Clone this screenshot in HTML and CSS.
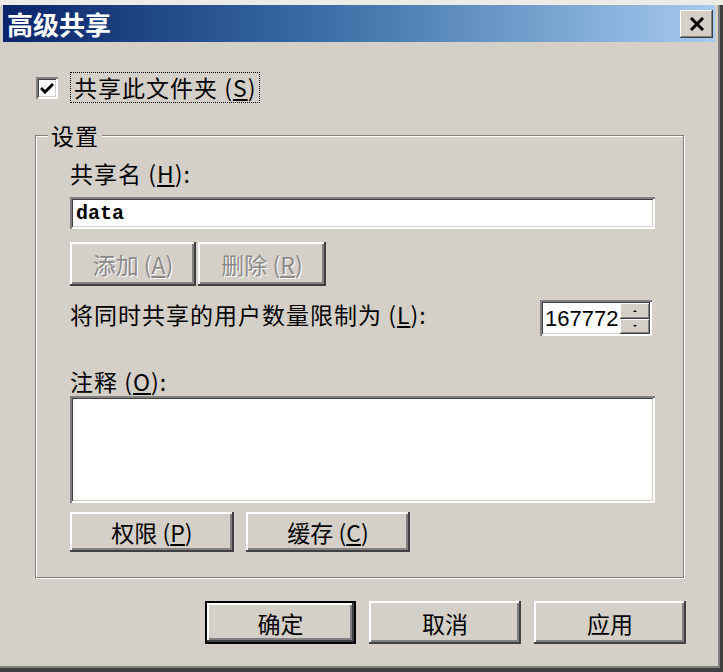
FILE: index.html
```html
<!DOCTYPE html>
<html lang="zh-CN">
<head>
    <meta charset="UTF-8">
    <title>高级共享</title>
    <link rel="stylesheet" href="styles.css">
</head>
<body>
    <div class="window">
        <div class="titlebar">
            <span class="title">高级共享</span>
            <button class="close" aria-label="关闭">
                <svg width="16" height="14" viewBox="0 0 16 14">
                    <path d="M2 1 L14 13 M14 1 L2 13" stroke="#000" stroke-width="3" fill="none"/>
                </svg>
            </button>
        </div>

        <div class="content">
            <div class="check-row">
                <span class="checkbox">
                    <svg width="14" height="12" viewBox="0 0 14 12">
                        <path d="M1 6 L5 10 L13 2" stroke="#000" stroke-width="3" fill="none"/>
                    </svg>
                </span>
                <span class="focus-label">共享此文件夹 (<u>S</u>)</span>
            </div>

            <div class="group">
                <span class="legend">设置</span>

                <div class="label">共享名 (<u>H</u>):</div>
                <div class="field">data</div>

                <div class="btn-row">
                    <button class="btn disabled add">添加 (<u>A</u>)</button>
                    <button class="btn disabled remove">删除 (<u>R</u>)</button>
                </div>

                <div class="limit-row">
                    <span class="label">将同时共享的用户数量限制为 (<u>L</u>):</span>
                    <div class="spin">
                        <span class="spin-value">167772</span>
                        <div class="spin-btns">
                            <span class="spin-btn"><i class="arrow up"></i></span>
                            <span class="spin-btn"><i class="arrow down"></i></span>
                        </div>
                    </div>
                </div>

                <div class="label note-label">注释 (<u>O</u>):</div>
                <div class="field memo"></div>

                <div class="btn-row wide">
                    <button class="btn">权限 (<u>P</u>)</button>
                    <button class="btn">缓存 (<u>C</u>)</button>
                </div>
            </div>

            <div class="actions">
                <button class="btn dlg default">确定</button>
                <button class="btn dlg">取消</button>
                <button class="btn dlg">应用</button>
            </div>
        </div>
    </div>
</body>
</html>
```

FILE: styles.css
```css
body {
    margin: 0;
    font-family: "Noto Sans CJK SC", "Liberation Sans", sans-serif;
    font-size: 23px;
    letter-spacing: 1px;
    color: #000;
    background-color: #d4d0c8;
}

.window {
    width: 723px;
    height: 672px;
    box-sizing: border-box;
    padding: 5px 8px 4px 3px;
    background-color: #d4d0c8;
    box-shadow: inset 0 5px 0 #ecebe6, inset -3px -4px 0 #404040, inset -5px -6px 0 #808080;
}

.titlebar {
    height: 37px;
    display: flex;
    align-items: center;
    justify-content: space-between;
    background: linear-gradient(to right, #0a246a 0%, #3a6ea5 45%, #a6caf0 100%);
}

.title {
    color: #fff;
    font-weight: bold;
    font-size: 26px;
    letter-spacing: 0;
    padding-left: 4px;
    line-height: 37px;
}

.close {
    width: 33px;
    height: 28px;
    margin-right: 2px;
    padding: 0;
    border: none;
    display: flex;
    align-items: center;
    justify-content: center;
    background-color: #d4d0c8;
    box-shadow: inset -1px -1px #404040, inset 1px 1px #fff, inset -2px -2px #808080;
}

.content {
    padding: 0 31px 0 32px;
}

/* checkbox */
.check-row {
    margin-top: 30px;
    height: 31px;
    display: flex;
    align-items: center;
}

.checkbox {
    width: 22px;
    height: 22px;
    margin-left: 1px;
    box-sizing: border-box;
    background: #fff;
    display: flex;
    align-items: center;
    justify-content: center;
    box-shadow: inset 2px 2px #808080, inset -2px -2px #fff, inset 3px 3px #404040, inset -3px -3px #d4d0c8;
}

.focus-label {
    margin-left: 12px;
    height: 31px;
    line-height: 29px;
    box-sizing: border-box;
    padding: 0 3px;
    border: 1px dotted #000;
}

/* group box */
.group {
    position: relative;
    margin-top: 32px;
    padding: 23px 28px 25px 34px;
    border: 1px solid #808080;
    box-shadow: inset 1px 1px #fff, 1px 1px #fff;
}

.legend {
    position: absolute;
    top: -15px;
    left: 12px;
    padding: 0 3px;
    line-height: 28px;
    background-color: #d4d0c8;
}

.label {
    line-height: 28px;
}

.field {
    margin-top: 10px;
    height: 32px;
    box-sizing: border-box;
    padding: 3px 6px 0;
    background: #fff;
    font-family: "Liberation Mono", monospace;
    font-weight: bold;
    font-size: 20px;
    letter-spacing: 0;
    line-height: 27px;
    box-shadow: inset 2px 2px #808080, inset -2px -2px #fff, inset 3px 3px #404040, inset -3px -3px #d4d0c8;
}

.field.memo {
    margin-top: 1px;
    height: 107px;
}

/* buttons */
.btn {
    font: inherit;
    color: #000;
    padding: 0;
    border: none;
    background-color: #d4d0c8;
    box-shadow: inset -2px -2px #404040, inset 2px 2px #fff, inset -4px -4px #808080;
}

.btn.disabled {
    color: #8a8a88;
    text-shadow: 1px 1px #fff;
}

.btn-row {
    margin-top: 13px;
    display: flex;
    gap: 2px;
}

.btn-row .btn {
    height: 44px;
}

.btn.add {
    width: 126px;
}

.btn.remove {
    width: 128px;
}

.btn-row.wide {
    margin-top: 9px;
    gap: 12px;
}

.btn-row.wide .btn {
    width: 164px;
    height: 40px;
}

.limit-row {
    margin-top: 14px;
    height: 36px;
    display: flex;
    align-items: center;
    justify-content: space-between;
}

.limit-row .label {
    margin-top: -8px;
}

.note-label {
    margin-top: 31px;
}

/* spinner */
.spin {
    width: 112px;
    height: 36px;
    margin-right: 3px;
    box-sizing: border-box;
    padding: 3px 2px 2px 3px;
    display: flex;
    background: #fff;
    box-shadow: inset 2px 2px #808080, inset -2px -2px #fff, inset 3px 3px #404040, inset -3px -3px #d4d0c8;
}

.spin-value {
    flex: 1;
    font-family: "Liberation Sans", sans-serif;
    font-size: 22px;
    letter-spacing: 0;
    line-height: 31px;
    padding-left: 2px;
}

.spin-btns {
    width: 30px;
    display: flex;
    flex-direction: column;
}

.spin-btn {
    flex: 1;
    display: flex;
    align-items: center;
    justify-content: center;
    background-color: #d4d0c8;
    box-shadow: inset -1px -1px #404040, inset 1px 1px #fff, inset -2px -2px #808080;
}

.arrow {
    width: 0;
    height: 0;
    border-left: 2px solid transparent;
    border-right: 2px solid transparent;
}

.arrow.up {
    border-bottom: 2px solid #000;
}

.arrow.down {
    border-top: 2px solid #000;
}

/* dialog buttons */
.actions {
    margin-top: 23px;
    margin-right: -2px;
    display: flex;
    justify-content: flex-end;
    gap: 13px;
}

.btn.dlg {
    width: 152px;
    height: 43px;
}

.btn.default {
    width: 151px;
    box-shadow: inset 0 0 0 2px #000, inset -4px -4px #404040, inset 4px 4px #fff, inset -6px -6px #808080;
}
```
